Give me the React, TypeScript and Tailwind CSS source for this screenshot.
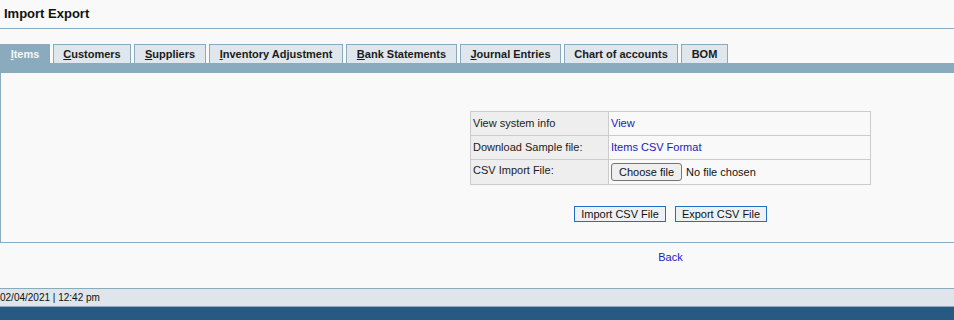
const tabs = [
  { label: "Items", key: "I", rest: "tems", active: true, w: "w-[50px]" },
  { label: "Customers", key: "C", rest: "ustomers", w: "w-[78px]" },
  { label: "Suppliers", key: "S", rest: "uppliers", w: "w-[72px]" },
  { label: "Inventory Adjustment", key: "I", rest: "nventory Adjustment", w: "w-[134px]" },
  { label: "Bank Statements", key: "B", rest: "ank Statements", w: "w-[111px]" },
  { label: "Journal Entries", key: "J", rest: "ournal Entries", w: "w-[101px]" },
  { label: "Chart of accounts", key: "", rest: "Chart of accounts", w: "w-[114px]" },
  { label: "BOM", key: "", rest: "BOM", w: "w-[47px]" },
]

export default function App() {
  return (
    <div className="w-[954px] h-[320px] overflow-hidden bg-[#f9f9f9] font-['Liberation_Sans',Arial,sans-serif] text-[11px] text-[#222]">
      <div className="w-[1341px]">
        <div className="h-[29px] pl-[4px] pt-[4px] text-[13px] font-bold text-[#111] border-b border-[#8aabbd]">
          Import Export
        </div>
        <div className="h-[15px]" />
        <div className="flex gap-[3px] items-end">
          {tabs.map((t) => (
            <div
              key={t.label}
              className={
                (t.active
                  ? "text-[#f4f7f9] bg-[#8aabbd] "
                  : "text-[#1b1b1b] bg-[#dfe6ec] ") +
                t.w +
                " h-[19px] flex items-center justify-center font-bold border border-b-0 border-[#8aabbd]"
              }
            >
              <span>
                {t.key && <span className="underline">{t.key}</span>}
                {t.rest}
              </span>
            </div>
          ))}
        </div>
        <div className="h-[10px] bg-[#8aabbd]" />
        <div className="h-[170px] border border-t-0 border-[#8aabbd] flex flex-col items-center">
          <table className="mt-[38px] w-[401px] border-collapse border border-[#cccccc]">
            <tbody>
              <tr className="h-[24px]">
                <td className="w-[138px] px-[2px] border border-[#cccccc] bg-[#eeeeee]">View system info</td>
                <td className="px-[2px] border border-[#cccccc]">
                  <span className="text-[#2020c0]">View</span>
                </td>
              </tr>
              <tr className="h-[24px]">
                <td className="px-[2px] border border-[#cccccc] bg-[#eeeeee]">Download Sample file:</td>
                <td className="px-[2px] border border-[#cccccc]">
                  <span className="text-[#2020c0]">Items CSV Format</span>
                </td>
              </tr>
              <tr className="h-[25px]">
                <td className="px-[2px] pb-[3px] border border-[#cccccc] bg-[#eeeeee]">CSV Import File:</td>
                <td className="px-[2px] border border-[#cccccc]">
                  <div className="flex items-center gap-[4px] text-[11px]">
                    <span className="h-[18px] px-[7px] flex items-center border border-[#767676] rounded-[3px] bg-[#efefef] text-[#111]">
                      Choose file
                    </span>
                    <span className="text-[#111]">No file chosen</span>
                  </div>
                </td>
              </tr>
            </tbody>
          </table>
          <div className="mt-[21px] flex gap-[9px]">
            <span className="h-[16px] w-[92px] flex items-center justify-center border border-[#1f6fc5] bg-[#eef1f4] text-[#111]">
              Import CSV File
            </span>
            <span className="h-[16px] w-[92px] flex items-center justify-center border border-[#1f6fc5] bg-[#eef1f4] text-[#111]">
              Export CSV File
            </span>
          </div>
        </div>
        <div className="h-[45px] flex justify-center pt-[6px]">
          <span className="text-[#2020c0]">Back</span>
        </div>
        <div className="h-[19px] bg-[#dee5eb] border-t border-b border-[#8aabbd] flex items-center text-[10px] text-[#111]">
          02/04/2021 | 12:42 pm
        </div>
        <div className="h-[40px] bg-[#275a83] flex justify-center pt-[9px] text-[11px] font-bold text-white">
          FrontAccounting 2.4.9 - Theme: default
        </div>
      </div>
    </div>
  )
}
